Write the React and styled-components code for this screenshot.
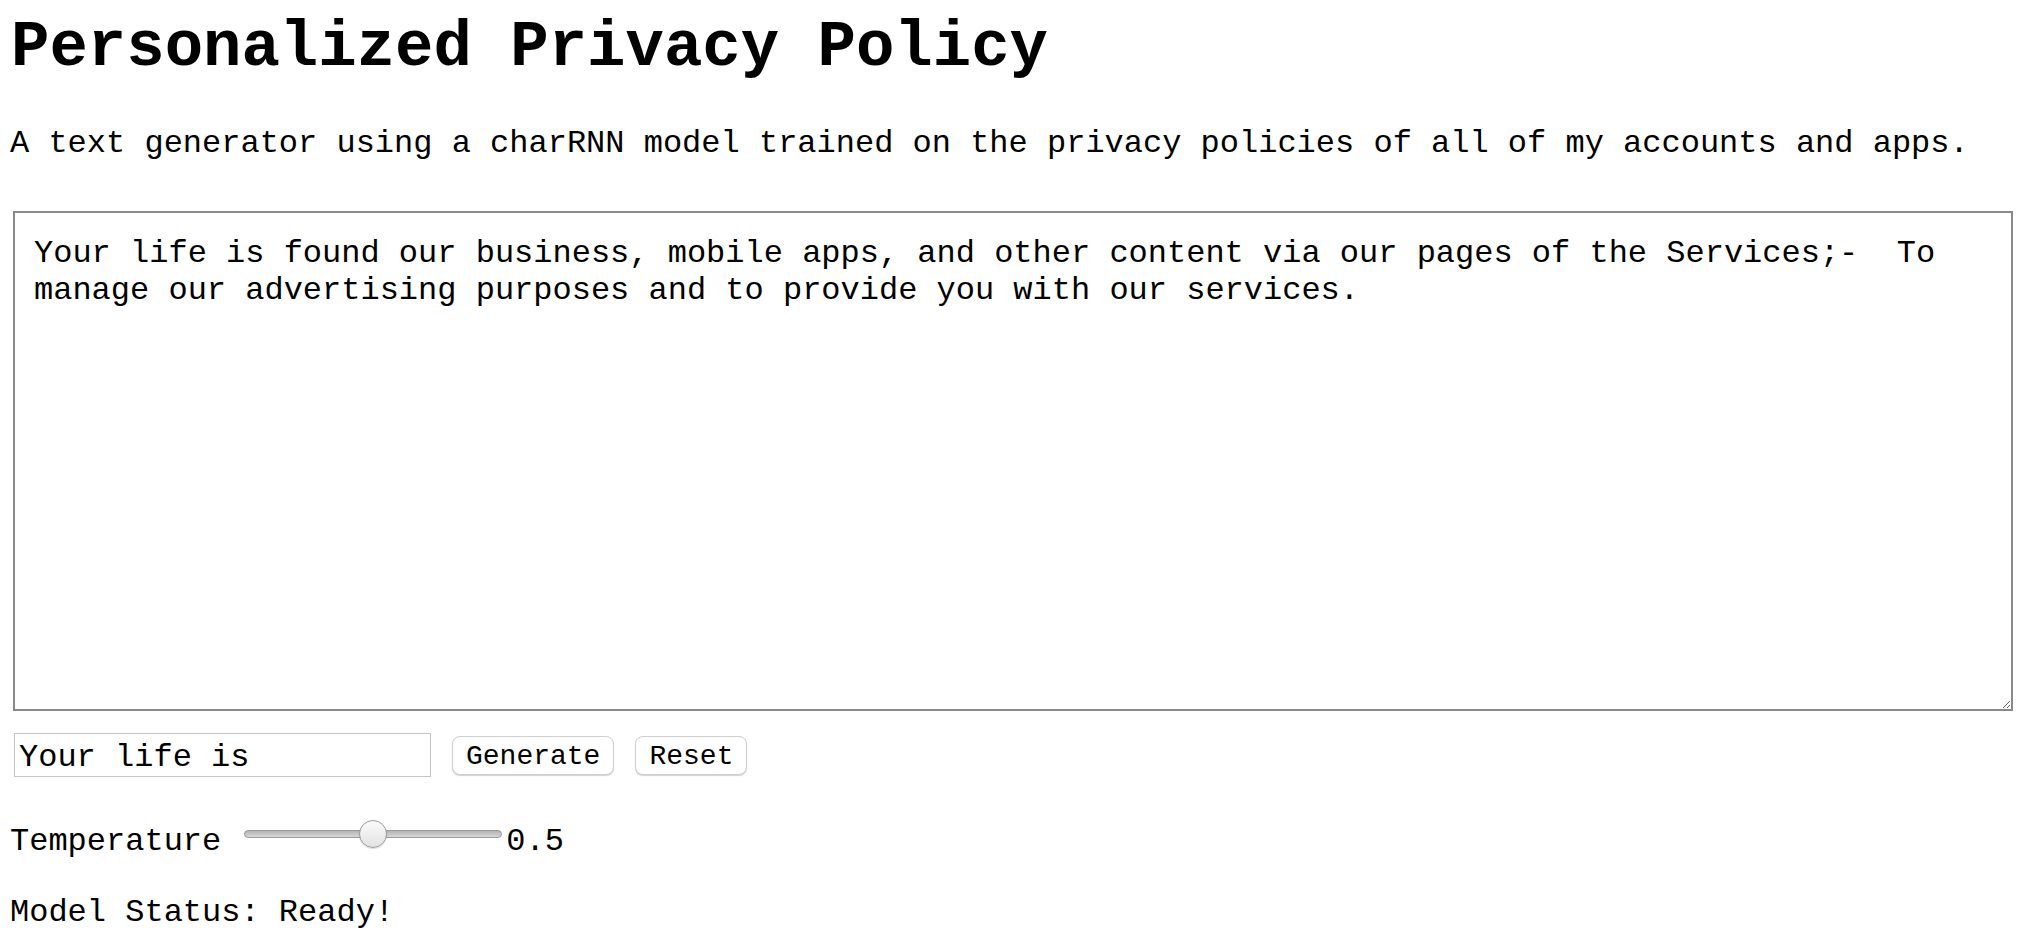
import React from 'react'
import styled, { createGlobalStyle } from 'styled-components'

const mono = `"Liberation Mono", "Courier New", monospace`

const GlobalStyle = createGlobalStyle`
  html, body {
    margin: 0;
    padding: 0;
    background: #ffffff;
  }
  body {
    font-family: ${mono};
    color: #000000;
  }
`

const Page = styled.main`
  padding: 12px 0 0 10px;
  font-family: ${mono};
  font-size: 32px;
  line-height: normal;
`

const Title = styled.h1`
  margin: 0 0 0 1px;
  font-size: 64px;
  font-weight: 700;
  line-height: normal;
`

const Intro = styled.p`
  margin: 41px 0 0;
`

const Output = styled.textarea`
  display: block;
  box-sizing: border-box;
  width: 2000px;
  height: 500px;
  margin: 49px 0 0 3px;
  padding: 22px 20px 18px 19px;
  border: 2px solid #8a8a8a;
  border-radius: 0;
  font-family: ${mono};
  font-size: 32px;
  line-height: normal;
  color: #000000;
  background: #ffffff;
  outline: none;
`

const Controls = styled.div`
  display: flex;
  align-items: center;
  gap: 21px;
  margin: 22px 0 0 4px;
`

const Seed = styled.input`
  box-sizing: border-box;
  width: 417px;
  height: 44px;
  margin: 0;
  padding: 4px 4px 0;
  border: 1px solid #c4c4c4;
  font-family: ${mono};
  font-size: 32px;
  color: #000000;
  outline: none;
`

const Button = styled.button`
  box-sizing: border-box;
  height: 39px;
  margin: 0;
  padding: 2px 13px 0;
  border: 1px solid #cfcfcf;
  border-radius: 8px;
  background: #ffffff;
  box-shadow: 0 1px 1px rgba(0, 0, 0, 0.18);
  font-family: ${mono};
  font-size: 28px;
  color: #000000;
  cursor: pointer;
`

const SliderRow = styled.div`
  display: flex;
  align-items: flex-start;
  margin-top: 46px;
`

const Label = styled.span`
  margin-right: 23px;
`

const Slider = styled.input`
  -webkit-appearance: none;
  appearance: none;
  width: 258px;
  height: 28px;
  margin: -3px 4px 0 0;
  padding: 0;
  background: transparent;
  outline: none;

  &::-webkit-slider-runnable-track {
    height: 8px;
    border-radius: 4px;
    border: 1px solid #9a9a9a;
    box-sizing: border-box;
    background: linear-gradient(#b4b4b4, #d6d6d6);
  }

  &::-webkit-slider-thumb {
    -webkit-appearance: none;
    appearance: none;
    width: 28px;
    height: 28px;
    margin-top: -11px;
    border-radius: 50%;
    border: 1.5px solid #9c9c9c;
    box-sizing: border-box;
    background: linear-gradient(#fbfbfb, #e2e2e2);
    box-shadow: 0 1px 1px rgba(0, 0, 0, 0.15);
  }
`

const Status = styled.p`
  margin: 34px 0 0;
`

const generated =
  'Your life is found our business, mobile apps, and other content via our pages of the Services;-  To manage our advertising purposes and to provide you with our services.'

export default function App() {
  return (
    <>
      <GlobalStyle />
      <Page>
        <Title>Personalized Privacy Policy</Title>
        <Intro>
          A text generator using a charRNN model trained on the privacy policies of all of my accounts and apps.
        </Intro>
        <Output defaultValue={generated} spellCheck={false} />
        <Controls>
          <Seed type="text" defaultValue="Your life is" spellCheck={false} />
          <Button>Generate</Button>
          <Button>Reset</Button>
        </Controls>
        <SliderRow>
          <Label>Temperature</Label>
          <Slider type="range" min="0" max="1" step="0.01" defaultValue="0.5" />
          <span>0.5</span>
        </SliderRow>
        <Status>Model Status: Ready!</Status>
      </Page>
    </>
  )
}
